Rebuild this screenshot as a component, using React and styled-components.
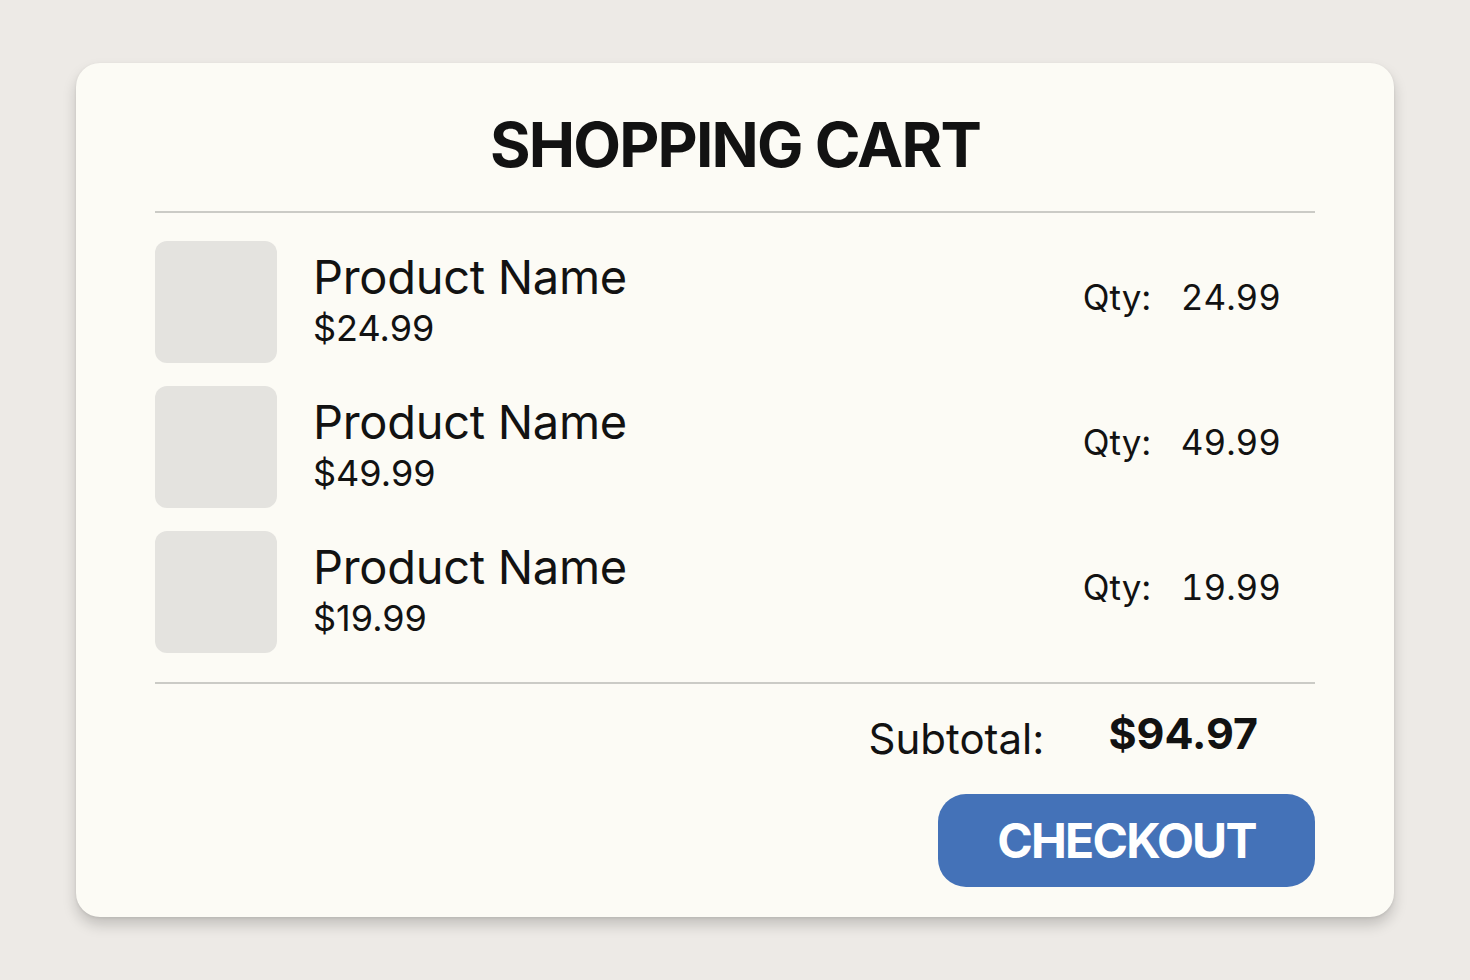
import React from "react";
import styled, { createGlobalStyle } from "styled-components";

const GlobalStyle = createGlobalStyle`
  html, body {
    margin: 0;
    padding: 0;
    background: #edeae6;
    font-family: "Inter", "Liberation Sans", sans-serif;
    color: #121212;
  }
`;

const Page = styled.div`
  width: 1470px;
  height: 980px;
  padding: 63px 0 0 76px;
  box-sizing: border-box;
`;

const Card = styled.div`
  width: 1318px;
  height: 854px;
  box-sizing: border-box;
  background: #fcfbf5;
  border-radius: 24px;
  box-shadow: 0 8px 14px rgba(0, 0, 0, 0.18), 0 1px 3px rgba(0, 0, 0, 0.08);
  padding: 0 79px;
  display: flex;
  flex-direction: column;
`;

const Header = styled.div`
  height: 148px;
  display: flex;
  align-items: center;
  justify-content: center;
  padding-top: 16px;
  box-sizing: border-box;
`;

const Title = styled.h1`
  margin: 0;
  font-size: 62px;
  font-weight: 700;
  line-height: 1;
  letter-spacing: -1.8px;
`;

const Divider = styled.div`
  height: 2px;
  background: #cbcbc6;
`;

const List = styled.div`
  display: flex;
  flex-direction: column;
  gap: 23px;
  padding: 28px 0 29px;
`;

const Row = styled.div`
  display: flex;
  align-items: center;
  height: 122px;
`;

const Thumb = styled.div`
  width: 122px;
  height: 122px;
  border-radius: 12px;
  background: #e4e3df;
  flex-shrink: 0;
`;

const Info = styled.div`
  margin-left: 36px;
  display: flex;
  flex-direction: column;
  flex: 1;
  margin-bottom: 4px;
`;

const Name = styled.div`
  font-size: 47px;
  line-height: 56px;
  letter-spacing: -0.3px;
`;

const Price = styled.div`
  font-size: 36px;
  line-height: 46px;
`;

const Qty = styled.div`
  display: flex;
  gap: 30px;
  font-size: 35px;
  font-variant-numeric: tabular-nums;
  margin-right: 34px;
  margin-bottom: 10px;
`;

const Footer = styled.div`
  display: flex;
  flex-direction: column;
  align-items: flex-end;
`;

const SubtotalRow = styled.div`
  display: flex;
  align-items: baseline;
  gap: 64px;
  margin: 23px 57px 0 0;
  height: 87px;
`;

const SubtotalLabel = styled.span`
  font-size: 42px;
  position: relative;
  top: 5px;
`;

const SubtotalValue = styled.span`
  font-size: 43px;
  font-weight: 700;
`;

const CheckoutButton = styled.button`
  width: 377px;
  height: 93px;
  border: none;
  border-radius: 28px;
  background: #4472b8;
  color: #fff;
  font-family: "Inter", "Liberation Sans", sans-serif;
  font-size: 48px;
  font-weight: 700;
  letter-spacing: -1.8px;
  cursor: pointer;
`;

const items = [
  { price: "$24.99", qty: "24.99" },
  { price: "$49.99", qty: "49.99" },
  { price: "$19.99", qty: "19.99" },
];

export default function App() {
  return (
    <>
      <GlobalStyle />
      <Page>
        <Card>
          <Header>
            <Title>SHOPPING CART</Title>
          </Header>
          <Divider />
          <List>
            {items.map((item, i) => (
              <Row key={i}>
                <Thumb />
                <Info>
                  <Name>Product Name</Name>
                  <Price>{item.price}</Price>
                </Info>
                <Qty>
                  <span>Qty:</span>
                  <span>{item.qty}</span>
                </Qty>
              </Row>
            ))}
          </List>
          <Divider />
          <Footer>
            <SubtotalRow>
              <SubtotalLabel>Subtotal:</SubtotalLabel>
              <SubtotalValue>$94.97</SubtotalValue>
            </SubtotalRow>
            <CheckoutButton>CHECKOUT</CheckoutButton>
          </Footer>
        </Card>
      </Page>
    </>
  );
}
